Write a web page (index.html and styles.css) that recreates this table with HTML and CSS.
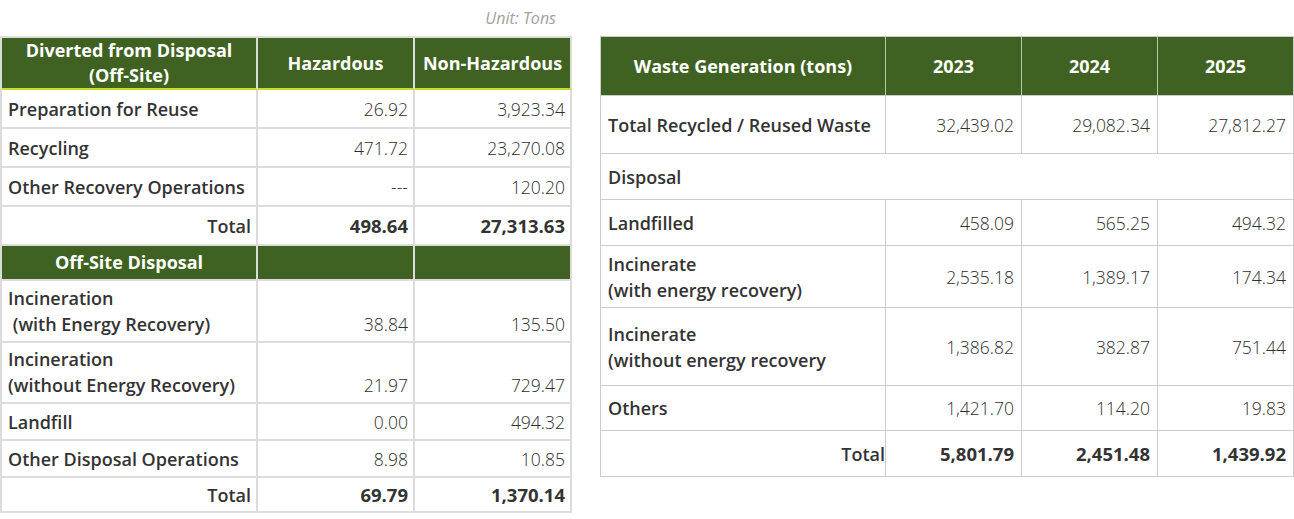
FILE: index.html
```html
<!DOCTYPE html>
<html>
<head>
<meta charset="utf-8">
<link rel="stylesheet" href="styles.css">
</head>
<body>
<div class="page">
  <section class="left">
    <div class="unit">Unit: Tons</div>
    <table class="tbl tbl-left">
      <colgroup><col class="lc1"><col class="lc2"><col class="lc3"></colgroup>
      <tr class="h52 head">
        <th>Diverted from Disposal<br>(Off-Site)</th>
        <th>Hazardous</th>
        <th>Non-Hazardous</th>
      </tr>
      <tr class="h39"><td class="lbl">Preparation for Reuse</td><td class="num">26.92</td><td class="num">3,923.34</td></tr>
      <tr class="h39"><td class="lbl">Recycling</td><td class="num">471.72</td><td class="num">23,270.08</td></tr>
      <tr class="h39"><td class="lbl">Other Recovery Operations</td><td class="num">---</td><td class="num">120.20</td></tr>
      <tr class="h39"><td class="lbl right">Total</td><td class="num bold">498.64</td><td class="num bold">27,313.63</td></tr>
      <tr class="h34 head sub">
        <th>Off-Site Disposal</th><th></th><th></th>
      </tr>
      <tr class="h62 bot"><td class="lbl">Incineration<br>&nbsp;(with Energy Recovery)</td><td class="num">38.84</td><td class="num">135.50</td></tr>
      <tr class="h61 bot"><td class="lbl">Incineration<br>(without Energy Recovery)</td><td class="num">21.97</td><td class="num">729.47</td></tr>
      <tr class="h37 bot"><td class="lbl">Landfill</td><td class="num">0.00</td><td class="num">494.32</td></tr>
      <tr class="h37 bot"><td class="lbl">Other Disposal Operations</td><td class="num">8.98</td><td class="num">10.85</td></tr>
      <tr class="h35"><td class="lbl right">Total</td><td class="num bold">69.79</td><td class="num bold">1,370.14</td></tr>
    </table>
  </section>
  <section class="rightcol">
    <table class="tbl tbl-right">
      <colgroup><col class="rc1"><col class="rc2"><col class="rc3"><col class="rc4"></colgroup>
      <tr class="r59 head">
        <th>Waste Generation (tons)</th><th>2023</th><th>2024</th><th>2025</th>
      </tr>
      <tr class="r58"><td class="lbl">Total Recycled / Reused Waste</td><td class="num">32,439.02</td><td class="num">29,082.34</td><td class="num">27,812.27</td></tr>
      <tr class="r46"><td class="lbl" colspan="4">Disposal</td></tr>
      <tr class="r46"><td class="lbl">Landfilled</td><td class="num">458.09</td><td class="num">565.25</td><td class="num">494.32</td></tr>
      <tr class="r62"><td class="lbl">Incinerate<br>(with energy recovery)</td><td class="num">2,535.18</td><td class="num">1,389.17</td><td class="num">174.34</td></tr>
      <tr class="r78"><td class="lbl">Incinerate<br>(without energy recovery</td><td class="num">1,386.82</td><td class="num">382.87</td><td class="num">751.44</td></tr>
      <tr class="r45"><td class="lbl">Others</td><td class="num">1,421.70</td><td class="num">114.20</td><td class="num">19.83</td></tr>
      <tr class="r46"><td class="lbl right tight">Total</td><td class="num bold">5,801.79</td><td class="num bold">2,451.48</td><td class="num bold">1,439.92</td></tr>
    </table>
  </section>
</div>
</body>
</html>
```
FILE: styles.css
```css
html, body {
  margin: 0;
  padding: 0;
  background: #ffffff;
}
body {
  font-family: "Open Sans", "Noto Sans", "Liberation Sans", sans-serif;
  color: #333333;
}
.page {
  display: flex;
  align-items: flex-start;
  gap: 28px;
}
.left {
  width: 572px;
  flex: none;
}
.unit {
  height: 36px;
  line-height: 36px;
  text-align: right;
  padding-right: 16px;
  font-size: 16px;
  font-style: italic;
  color: #a0a0a0;
  box-sizing: border-box;
}
.rightcol {
  width: 694px;
  padding-top: 36px;
  flex: none;
}
.tbl {
  border-collapse: separate;
  border-spacing: 0;
  table-layout: fixed;
}
.tbl-left {
  width: 572px;
  border-top: 2px solid #dcdcdc;
  border-left: 2px solid #dcdcdc;
}
.tbl-left th, .tbl-left td {
  border-right: 2px solid #dcdcdc;
  border-bottom: 2px solid #dcdcdc;
}
.lc1 { width: 256px; }
.lc2 { width: 157px; }
.lc3 { width: 157px; }
.tbl th {
  background: #3f6121;
  color: #ffffff;
  font-weight: 700;
  font-size: 18px;
  line-height: 25px;
  text-align: center;
  padding: 0 2px;
  white-space: nowrap;
}
.tbl-left tr.head th {
  border-bottom: 2px solid #c8dc2a;
}
.tbl-left tr.sub th {
  border-bottom: 2px solid #dcdcdc;
}
.tbl td {
  font-size: 18px;
  line-height: 26px;
  padding: 0 5px 0 6px;
}
.tbl-left td {
  vertical-align: middle;
}
.tbl-left tr.bot td {
  vertical-align: bottom;
  padding-bottom: 4px;
}
.lbl {
  font-weight: 600;
  color: #333333;
  text-align: left;
  white-space: nowrap;
}
.lbl.right {
  text-align: right;
}
.num {
  text-align: right;
  font-size: 17.5px;
  font-weight: 300;
  color: #2e2e2e;
}
.tbl td.num {
  font-size: 17.5px;
}
.tbl td.num.bold {
  font-size: 18.5px;
  font-weight: 700;
  color: #333333;
}
.h52 { height: 52px; }
.h39 { height: 39px; }
.h34 { height: 35px; }
.h62 { height: 62px; }
.h61 { height: 61px; }
.h37 { height: 37px; }
.h35 { height: 35px; }

.tbl-right {
  width: 694px;
  border-top: 1px solid #cccccc;
  border-left: 1px solid #cccccc;
}
.tbl-right th, .tbl-right td {
  border-right: 1px solid #cccccc;
  border-bottom: 1px solid #cccccc;
}
.tbl-right th {
  border-right-color: #b8c4ad;
}
.tbl-right th:last-child {
  border-right-color: #cccccc;
}
.tbl-right td {
  vertical-align: middle;
  padding: 0 7px 0 7px;
}
.tbl-right td.tight {
  padding-right: 0;
}
.rc1 { width: 285px; }
.rc2 { width: 136px; }
.rc3 { width: 136px; }
.rc4 { width: 136px; }
.r59 { height: 59px; }
.r58 { height: 58px; }
.r46 { height: 46px; }
.r62 { height: 62px; }
.r78 { height: 78px; }
.r45 { height: 45px; }
```
